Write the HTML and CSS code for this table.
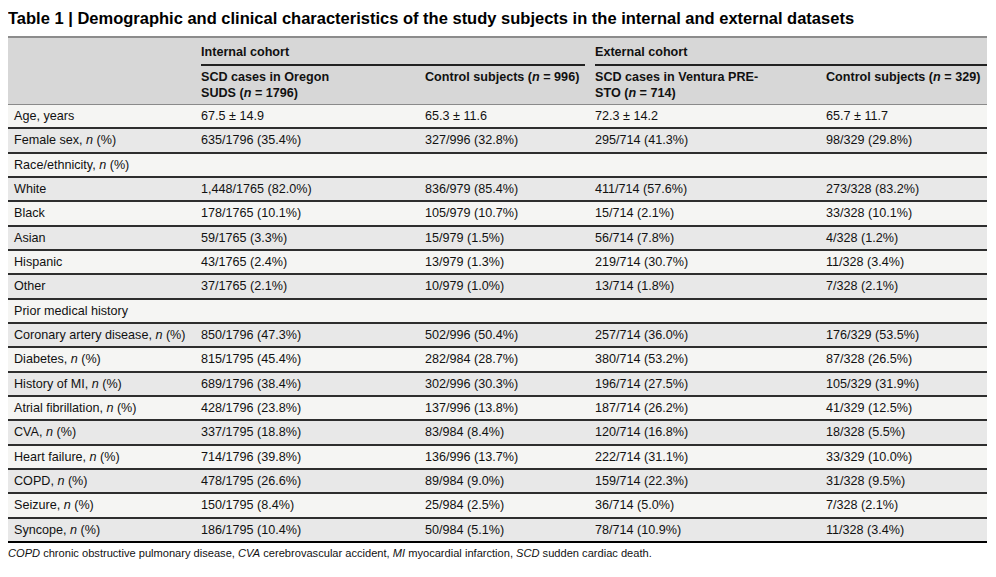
FILE: index.html
```html
<!DOCTYPE html>
<html lang="en">
<head>
<meta charset="utf-8">
<title>Table 1</title>
<link rel="stylesheet" href="styles.css">
</head>
<body>
<h1 class="title">Table 1 | Demographic and clinical characteristics of the study subjects in the internal and external datasets</h1>
<table class="data">
  <colgroup>
    <col class="c1"><col class="c2"><col class="c3"><col class="c4"><col class="c5">
  </colgroup>
  <thead>
    <tr class="h1">
      <th></th>
      <th colspan="2" class="group g-int"><div class="gl">Internal cohort</div></th>
      <th colspan="2" class="group g-ext"><div class="gl">External cohort</div></th>
    </tr>
    <tr class="h2">
      <th></th>
      <th>SCD cases in Oregon<br>SUDS (<i>n</i> = 1796)</th>
      <th>Control subjects (<i>n</i> = 996)</th>
      <th>SCD cases in Ventura PRE-<br>STO (<i>n</i> = 714)</th>
      <th>Control subjects (<i>n</i> = 329)</th>
    </tr>
  </thead>
  <tbody>
    <tr><td>Age, years</td><td>67.5 ± 14.9</td><td>65.3 ± 11.6</td><td>72.3 ± 14.2</td><td>65.7 ± 11.7</td></tr>
    <tr><td>Female sex, <i>n</i> (%)</td><td>635/1796 (35.4%)</td><td>327/996 (32.8%)</td><td>295/714 (41.3%)</td><td>98/329 (29.8%)</td></tr>
    <tr><td>Race/ethnicity, <i>n</i> (%)</td><td></td><td></td><td></td><td></td></tr>
    <tr><td>White</td><td>1,448/1765 (82.0%)</td><td>836/979 (85.4%)</td><td>411/714 (57.6%)</td><td>273/328 (83.2%)</td></tr>
    <tr><td>Black</td><td>178/1765 (10.1%)</td><td>105/979 (10.7%)</td><td>15/714 (2.1%)</td><td>33/328 (10.1%)</td></tr>
    <tr><td>Asian</td><td>59/1765 (3.3%)</td><td>15/979 (1.5%)</td><td>56/714 (7.8%)</td><td>4/328 (1.2%)</td></tr>
    <tr><td>Hispanic</td><td>43/1765 (2.4%)</td><td>13/979 (1.3%)</td><td>219/714 (30.7%)</td><td>11/328 (3.4%)</td></tr>
    <tr><td>Other</td><td>37/1765 (2.1%)</td><td>10/979 (1.0%)</td><td>13/714 (1.8%)</td><td>7/328 (2.1%)</td></tr>
    <tr><td>Prior medical history</td><td></td><td></td><td></td><td></td></tr>
    <tr><td>Coronary artery disease, <i>n</i> (%)</td><td>850/1796 (47.3%)</td><td>502/996 (50.4%)</td><td>257/714 (36.0%)</td><td>176/329 (53.5%)</td></tr>
    <tr><td>Diabetes, <i>n</i> (%)</td><td>815/1795 (45.4%)</td><td>282/984 (28.7%)</td><td>380/714 (53.2%)</td><td>87/328 (26.5%)</td></tr>
    <tr><td>History of MI, <i>n</i> (%)</td><td>689/1796 (38.4%)</td><td>302/996 (30.3%)</td><td>196/714 (27.5%)</td><td>105/329 (31.9%)</td></tr>
    <tr><td>Atrial fibrillation, <i>n</i> (%)</td><td>428/1796 (23.8%)</td><td>137/996 (13.8%)</td><td>187/714 (26.2%)</td><td>41/329 (12.5%)</td></tr>
    <tr><td>CVA, <i>n</i> (%)</td><td>337/1795 (18.8%)</td><td>83/984 (8.4%)</td><td>120/714 (16.8%)</td><td>18/328 (5.5%)</td></tr>
    <tr><td>Heart failure, <i>n</i> (%)</td><td>714/1796 (39.8%)</td><td>136/996 (13.7%)</td><td>222/714 (31.1%)</td><td>33/329 (10.0%)</td></tr>
    <tr><td>COPD, <i>n</i> (%)</td><td>478/1795 (26.6%)</td><td>89/984 (9.0%)</td><td>159/714 (22.3%)</td><td>31/328 (9.5%)</td></tr>
    <tr><td>Seizure, <i>n</i> (%)</td><td>150/1795 (8.4%)</td><td>25/984 (2.5%)</td><td>36/714 (5.0%)</td><td>7/328 (2.1%)</td></tr>
    <tr><td>Syncope, <i>n</i> (%)</td><td>186/1795 (10.4%)</td><td>50/984 (5.1%)</td><td>78/714 (10.9%)</td><td>11/328 (3.4%)</td></tr>
  </tbody>
</table>
<p class="note"><i>COPD</i> chronic obstructive pulmonary disease, <i>CVA</i> cerebrovascular accident, <i>MI</i> myocardial infarction, <i>SCD</i> sudden cardiac death.</p>
</body>
</html>
```

FILE: styles.css
```css
html, body {
  background: #ffffff;
}
body {
  margin: 8px;
  font-family: "Liberation Sans", Arial, Helvetica, sans-serif;
  color: #111;
}
.title {
  margin: 0 0 8px;
  font-size: 16.5px;
  line-height: 20px;
  font-weight: bold;
  color: #000;
}
.data {
  width: 979px;
  table-layout: fixed;
  border-collapse: collapse;
  font-size: 12.6px;
  line-height: 16px;
}
.c1 { width: 187px; }
.c2 { width: 224px; }
.c3 { width: 170px; }
.c4 { width: 231px; }
.c5 { width: 167px; }

.data thead {
  background: #d7d7d7;
}
.data th {
  text-align: left;
  font-weight: bold;
  vertical-align: top;
  padding: 0 6px;
}
.data tr.h1 th {
  border-top: 2px solid #8c8c8c;
  padding: 0;
}
.data tr.h1 th.g-int { padding: 0 4px 0 6px; }
.data tr.h1 th.g-ext { padding: 0 0 0 6px; }
.data th .gl {
  padding: 6px 0 4px;
  border-bottom: 2px solid #222;
}
.data tr.h2 th {
  padding: 3px 6px 3px;
  border-bottom: 1px solid #8a8a8a;
}
.data tbody tr {
  background: #f5f5f3;
}
.data tbody tr:nth-child(even) {
  background: #e8e8e8;
}
.data td {
  height: 22.33px;
  padding: 0 6px;
  vertical-align: middle;
  border-bottom: 2px solid #2e2e2e;
  white-space: nowrap;
}
.data tbody tr:last-child td {
  border-bottom-color: #000;
}
.note {
  margin: 3px 0 0;
  font-size: 11.1px;
  line-height: 14px;
}
```
